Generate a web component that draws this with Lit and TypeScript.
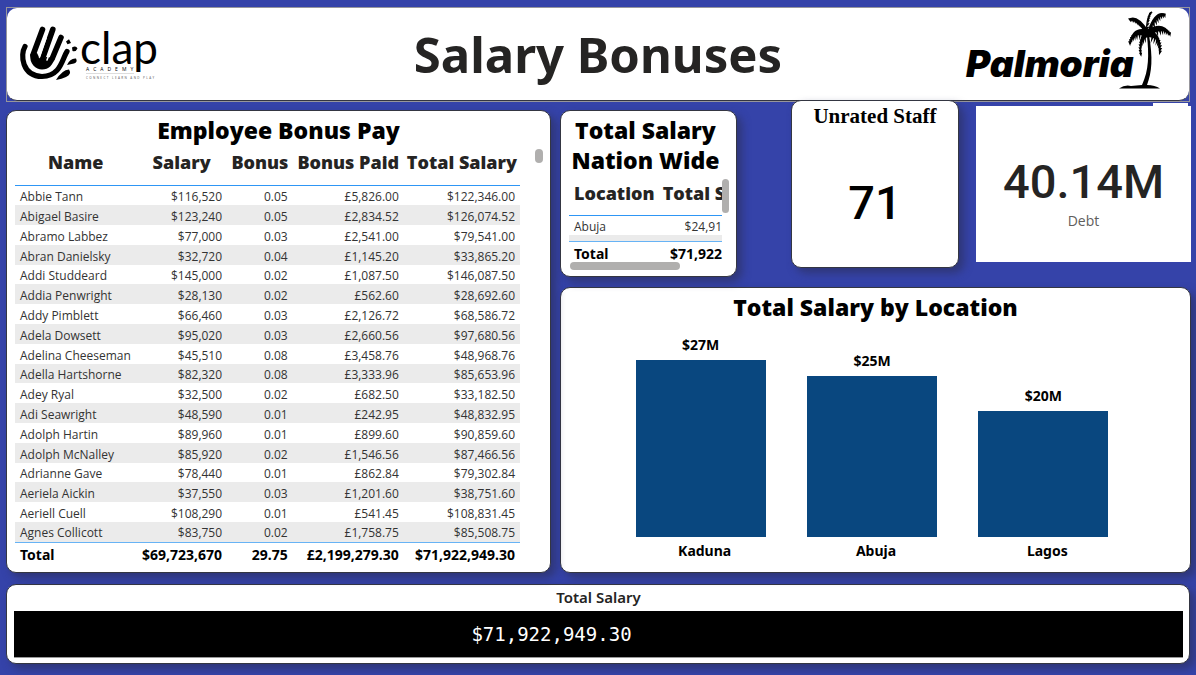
import { LitElement, html, css, svg } from "lit";
import { customElement } from "lit/decorators.js";
import { styleMap } from "lit/directives/style-map.js";

const employees: string[][] = [
  ["Abbie Tann", "$116,520", "0.05", "£5,826.00", "$122,346.00"],
  ["Abigael Basire", "$123,240", "0.05", "£2,834.52", "$126,074.52"],
  ["Abramo Labbez", "$77,000", "0.03", "£2,541.00", "$79,541.00"],
  ["Abran Danielsky", "$32,720", "0.04", "£1,145.20", "$33,865.20"],
  ["Addi Studdeard", "$145,000", "0.02", "£1,087.50", "$146,087.50"],
  ["Addia Penwright", "$28,130", "0.02", "£562.60", "$28,692.60"],
  ["Addy Pimblett", "$66,460", "0.03", "£2,126.72", "$68,586.72"],
  ["Adela Dowsett", "$95,020", "0.03", "£2,660.56", "$97,680.56"],
  ["Adelina Cheeseman", "$45,510", "0.08", "£3,458.76", "$48,968.76"],
  ["Adella Hartshorne", "$82,320", "0.08", "£3,333.96", "$85,653.96"],
  ["Adey Ryal", "$32,500", "0.02", "£682.50", "$33,182.50"],
  ["Adi Seawright", "$48,590", "0.01", "£242.95", "$48,832.95"],
  ["Adolph Hartin", "$89,960", "0.01", "£899.60", "$90,859.60"],
  ["Adolph McNalley", "$85,920", "0.02", "£1,546.56", "$87,466.56"],
  ["Adrianne Gave", "$78,440", "0.01", "£862.84", "$79,302.84"],
  ["Aeriela Aickin", "$37,550", "0.03", "£1,201.60", "$38,751.60"],
  ["Aeriell Cuell", "$108,290", "0.01", "£541.45", "$108,831.45"],
  ["Agnes Collicott", "$83,750", "0.02", "£1,758.75", "$85,508.75"],
];

const locations = [
  { name: "Kaduna", label: "$27M", height: 177 },
  { name: "Abuja", label: "$25M", height: 161 },
  { name: "Lagos", label: "$20M", height: 126 },
];

// One palm frond: a tapering curved blade with a fringe of leaflets under it.
function frond(x: number, y: number, cx: number, cy: number, drop: number, lean: number) {
  const ox = 183, oy = 23;
  const at = (t: number) => [
    (1 - t) * (1 - t) * ox + 2 * t * (1 - t) * cx + t * t * x,
    (1 - t) * (1 - t) * oy + 2 * t * (1 - t) * cy + t * t * y,
  ];
  const leaves = [0.2, 0.32, 0.44, 0.54, 0.64, 0.74, 0.83, 0.91].map((t) => {
    const [px, py] = at(t);
    const len = drop * (1.15 - t * 0.7);
    return `M${px - 1.5} ${py}L${px + lean * len} ${py + len}L${px + 1.7} ${py}Z`;
  });
  return svg`<path d="M${ox} ${oy - 3}Q${cx} ${cy - 3} ${x} ${y}Q${cx} ${cy + 3} ${ox} ${oy + 4}Z" />
    <path d=${leaves.join("")} />`;
}

@customElement("app-root")
export class AppRoot extends LitElement {
  static styles = css`
    :host {
      display: block;
      box-sizing: border-box;
      min-height: 100vh;
      padding: 7px 5px 11px 6px;
      background: #3543a9;
      color: #000;
      font-family: "Open Sans", "Noto Sans", sans-serif;
      font-size: 12px;
    }
    * { box-sizing: border-box; }
    h1, h2, p { margin: 0; }
    .card {
      background: #fff;
      border: 1px solid #343642;
      border-radius: 10px;
      box-shadow: 5px 5px 9px rgba(44, 48, 92, 0.65);
    }
    .heading {
      font: 800 23px/30px "Open Sans", sans-serif;
      text-align: center;
    }
    .frame { border: 1px solid #97969c; margin-right: 1px; }
    .banner {
      display: grid;
      grid-template-columns: 1fr auto 1fr;
      align-items: center;
      min-height: 93px;
      padding: 0 12px;
      background: #fff;
      border-bottom: 1px solid #343642;
      border-radius: 10px;
    }
    .banner h1 {
      color: #252423;
      font: bold 49px/60px "Noto Sans", sans-serif;
    }
    .banner svg { display: block; overflow: visible; }
    .palmoria { justify-self: end; margin-right: 4px; }
    .body {
      display: grid;
      grid-template-columns: 545fr 631fr;
      gap: 9px;
      padding-bottom: 11px;
    }
    .employees {
      margin-top: 8px;
      padding: 4px 8px;
      position: relative;
    }
    .employees .scroller { padding-right: 22px; }
    .thumb { position: absolute; background: #b0afae; border-radius: 4px; }
    .employees .thumb { top: 38px; right: 7px; width: 8px; height: 14px; }
    table { width: 100%; border-collapse: collapse; table-layout: fixed; }
    .c1 { width: 24%; }
    .c2 { width: 18%; }
    .c3 { width: 13%; }
    .c4 { width: 22%; }
    th, td { padding: 0 5px; white-space: nowrap; }
    thead th {
      padding: 0;
      height: 40px;
      padding-bottom: 6px;
      color: #252423;
      font: 800 18px/20px "Open Sans", sans-serif;
      border-bottom: 1px solid #2e96f5;
    }
    tbody td { height: 20px; padding-top: 2px; line-height: 17px; color: #333; text-align: right; }
    tbody tr:nth-child(5n) td { height: 19px; }
    tbody tr:nth-child(even) { background: #ebebeb; }
    td:first-child, tfoot th { text-align: left; }
    tfoot th, tfoot td {
      height: 26px;
      font: bold 14px/20px "Noto Sans", sans-serif;
      border-top: 1px solid #67b3f5;
    }
    tfoot td { text-align: right; }
    .right { display: flex; flex-direction: column; gap: 10px; }
    .top {
      display: grid;
      grid-template-columns: 177fr 54fr 168fr 17fr 215fr;
      align-items: start;
    }
    .nation {
      position: relative;
      min-height: 167px;
      margin-top: 8px;
      padding: 4px 14px 4px 8px;
    }
    .nation thead th { padding: 0 0 4px 5px; text-align: left; }
    .nation tbody td { padding-right: 0; }
    .nation tbody .spill td { height: 6px; padding: 0; line-height: 6px; }
    .nation tfoot td { padding-right: 0; }
    .nation .l1 { width: 58%; }
    .nation .down { top: 68px; right: 7px; width: 7px; height: 34px; }
    .nation .across { bottom: 6px; left: 9px; width: 63%; height: 8px; }
    .unrated {
      grid-column: 3;
      min-height: 168px;
      margin-top: -2px;
      text-align: center;
    }
    .unrated h2 { font: bold 21px/30px "Liberation Serif", serif; }
    .big { font: 500 47px/60px Roboto, sans-serif; color: #252423; }
    .unrated .big { padding-top: 42px; color: #000; }
    .debt {
      grid-column: 5;
      min-height: 156px;
      margin-top: 4px;
      padding-top: 46px;
      background: #fff;
      text-align: center;
      position: relative;
    }
    .debt::before {
      content: "";
      position: absolute;
      top: -3px;
      right: 3px;
      width: 35px;
      height: 3px;
      background: #fff;
    }
    .debt .name { color: #605e5c; font-size: 14px; line-height: 18px; }
    .chart { flex: 1; padding: 4px 0 11px; display: flex; flex-direction: column; }
    .bars, .cats {
      display: grid;
      grid-template-columns: repeat(3, 1fr);
      justify-items: center;
      font: bold 14px/20px "Noto Sans", sans-serif;
    }
    .bars { flex: 1; align-items: end; padding: 0 61px 0 54px; }
    .bar-item { width: 76%; text-align: center; }
    .bar { background: #09477f; margin-top: 5px; }
    .cats { padding: 4px 57px 0 58px; }
    .grand { margin-right: 1px; padding: 2px 6px 5px 7px; text-align: center; }
    .grand h2 { color: #252423; font: 600 15px/20px "Noto Sans", sans-serif; padding-bottom: 4px; }
    .ticker {
      background: #000;
      color: #fff;
      border-bottom: 1px solid #999;
      padding-right: 94px;
      font: 19px/46px "DejaVu Sans Mono", monospace;
    }
  `;

  private clapLogo() {
    return html`<svg width="140" height="60" viewBox="19 24 140 60" role="img" aria-label="Clap Academy">
      <g fill="none" stroke="#000" stroke-linecap="round">
        <path d="M42.5 29.5 33 55M52.8 29.5 42 60M61 37.500 52 59" stroke-width="5.600" />
        <path d="M25 46.500C20 55 22 76 42 76.500C61 76 62 59 67 51.500" stroke-width="5.200" />
      </g>
      <path d="M30.400 54C29 64 36 69.500 42 69.500C49 69.500 52.500 65 55 58L46 57L44 60L40 59L37 53Z" />
      <path d="M46 38 39.500 57M54 41 47 60" stroke="#fff" stroke-width="1.600" stroke-linecap="round" />
      <path d="M66 41.500 69 39.200 71 43 67.500 44.200ZM72 47.500Q76 45 77.500 48.500Q76 52 72.500 51ZM67 65Q70 58 76 58.500Q78 62 74 63.500ZM56 80Q62 70 69 69.500Q72 74 66 77Q62 79 56 80Z" />
      <text x="80" y="64" font-family="Lato" font-size="44">clap</text>
      <text x="86" y="71" font-family="Open Sans" font-size="5" letter-spacing="4">ACADEMY</text>
      <path d="M86 73.500H134" stroke="#bbb" stroke-width="0.500" />
      <text x="86" y="79" font-family="Open Sans" font-size="3" letter-spacing="1.400" fill="#555">CONNECT LEARN AND PLAY</text>
    </svg>`;
  }

  private palmLogo() {
    return html`<svg class="palmoria" width="208" height="84" viewBox="0 2 208 84" role="img" aria-label="Palmoria">
      <text x="1" y="67" font-family="Inter" font-weight="900" font-style="italic" font-size="37">Palmoria</text>
      <path d="M184 25C188 48 187 62 182 75Q190 75 195 78.500H154Q160 74.500 166 76L177 75C184 60 184 45 182 26Z" />
      ${frond(163, 9, 172, 6, 7, 0.3)}
      ${frond(187, 1, 182, 6, 5, -0.5)}
      ${frond(201, 4, 190, 2, 8, 0.3)}
      ${frond(206, 24, 197, 13, 9, 0.2)}
      ${frond(195, 44, 198, 25, 9, -0.3)}
      ${frond(176, 46, 172, 27, 8, 0.2)}
      ${frond(164, 34, 167, 18, 9, 0.1)}
      <circle cx="183" cy="23" r="4" />
    </svg>`;
  }

  render() {
    return html`
      <header class="frame">
        <div class="banner">${this.clapLogo()}<h1>Salary Bonuses</h1>${this.palmLogo()}</div>
      </header>
      <main class="body">
        <section class="card employees">
          <h2 class="heading">Employee Bonus Pay</h2>
          <div class="scroller">
            <table>
              <colgroup><col class="c1" /><col class="c2" /><col class="c3" /><col class="c4" /><col /></colgroup>
              <thead>
                <tr><th>Name</th><th>Salary</th><th>Bonus</th><th>Bonus Paid</th><th>Total Salary</th></tr>
              </thead>
              <tbody>
                ${employees.map((row) => html`<tr>${row.map((v) => html`<td>${v}</td>`)}</tr>`)}
              </tbody>
              <tfoot>
                <tr><th>Total</th><td>$69,723,670</td><td>29.75</td><td>£2,199,279.30</td><td>$71,922,949.30</td></tr>
              </tfoot>
            </table>
          </div>
          <span class="thumb"></span>
        </section>
        <div class="right">
          <div class="top">
            <section class="card nation">
              <h2 class="heading">Total Salary Nation Wide</h2>
              <table>
                <colgroup><col class="l1" /><col /></colgroup>
                <thead><tr><th>Location</th><th>Total S</th></tr></thead>
                <tbody>
                  <tr><td>Abuja</td><td>$24,91</td></tr>
                  <tr class="spill"><td></td><td></td></tr>
                </tbody>
                <tfoot><tr><th>Total</th><td>$71,922</td></tr></tfoot>
              </table>
              <span class="thumb down"></span>
              <span class="thumb across"></span>
            </section>
            <section class="card unrated">
              <h2>Unrated Staff</h2>
              <p class="big">71</p>
            </section>
            <section class="debt">
              <p class="big">40.14M</p>
              <p class="name">Debt</p>
            </section>
          </div>
          <section class="card chart">
            <h2 class="heading">Total Salary by Location</h2>
            <div class="bars">
              ${locations.map(
                (l) => html`<div class="bar-item">${l.label}
                  <div class="bar" style=${styleMap({ height: `${l.height}px` })}></div>
                </div>`
              )}
            </div>
            <div class="cats">${locations.map((l) => html`<span>${l.name}</span>`)}</div>
          </section>
        </div>
      </main>
      <section class="card grand">
        <h2>Total Salary</h2>
        <p class="ticker">$71,922,949.30</p>
      </section>
    `;
  }
}
